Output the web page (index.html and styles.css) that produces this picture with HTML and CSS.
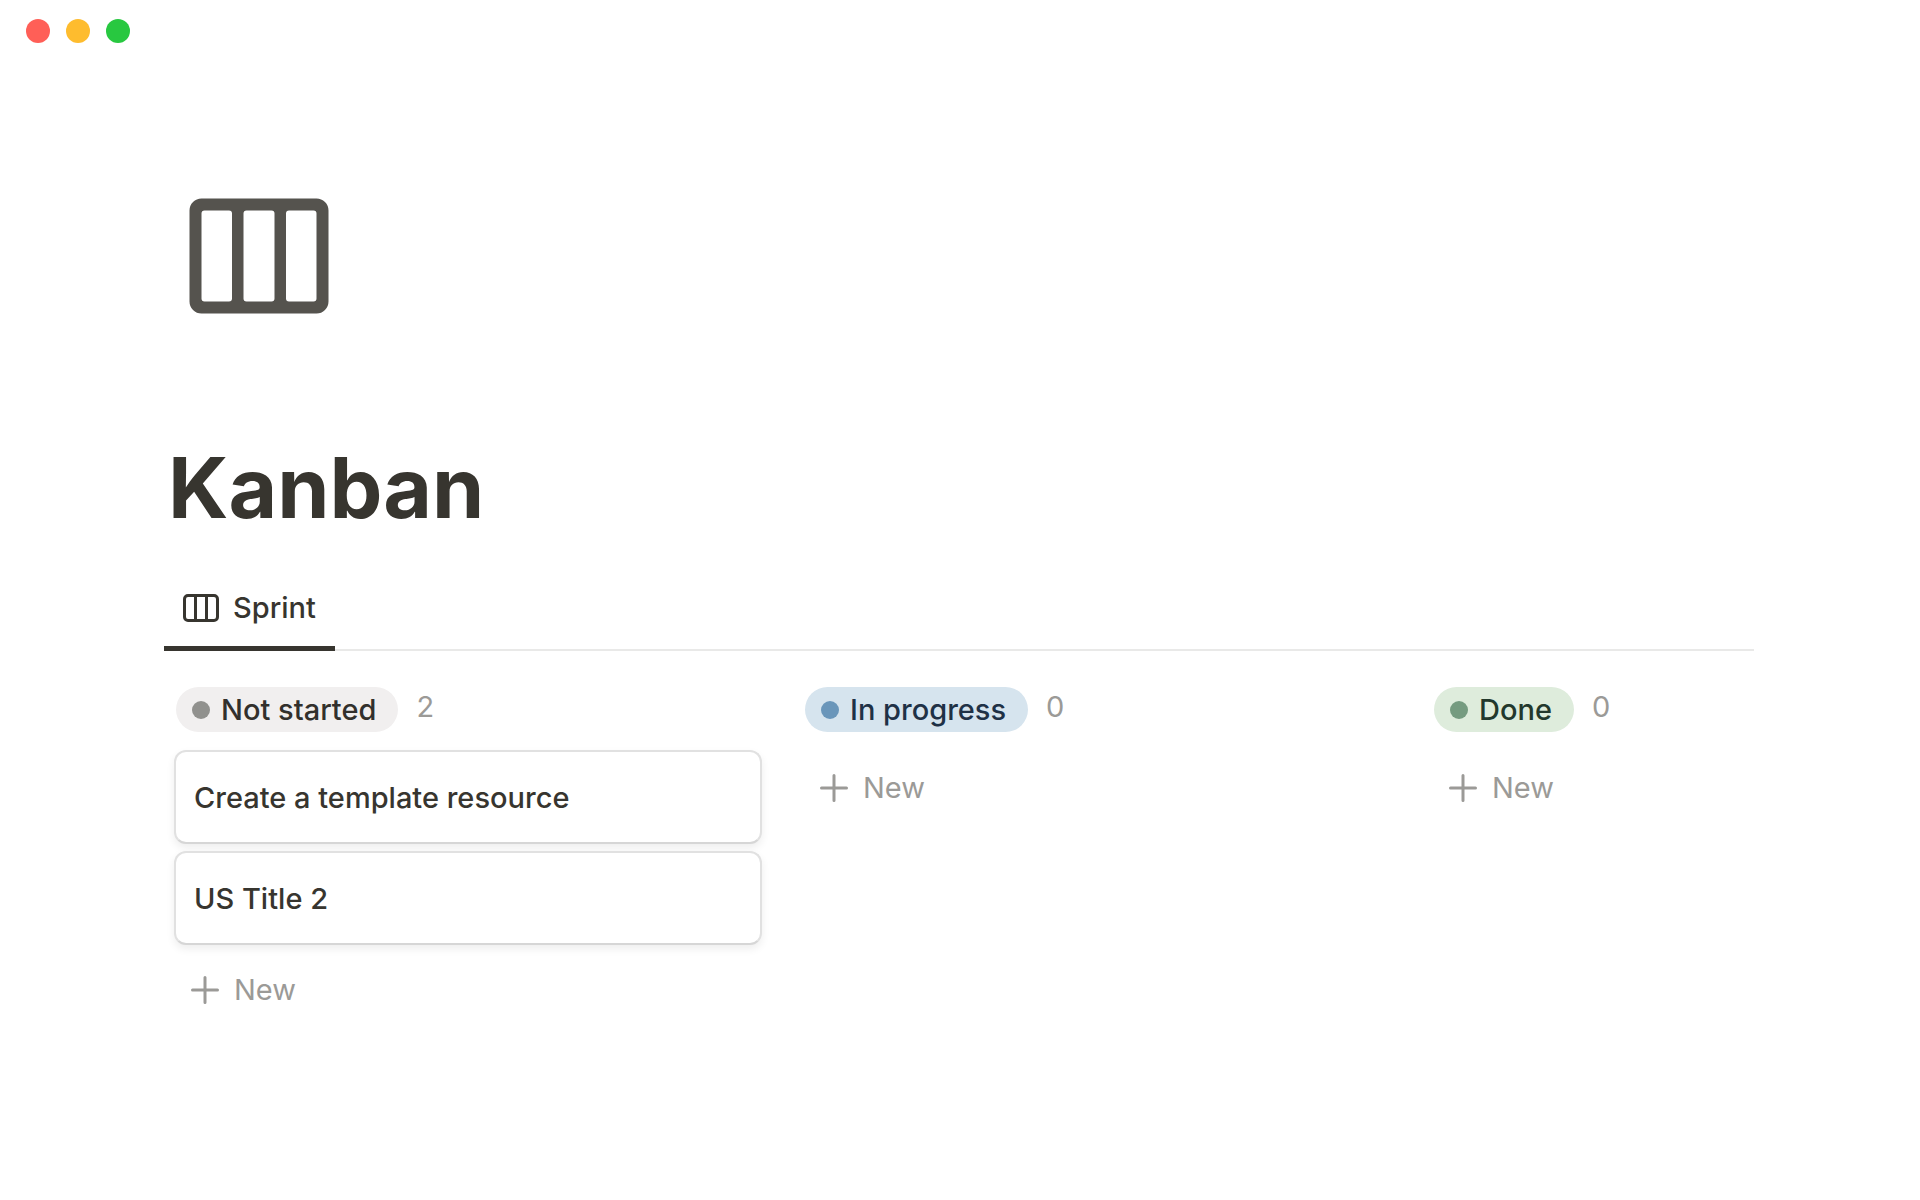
FILE: index.html
```html
<!DOCTYPE html>
<html lang="en">
<head>
<meta charset="utf-8">
<meta name="viewport" content="width=device-width, initial-scale=1">
<title>Kanban</title>
<link rel="stylesheet" href="styles.css">
</head>
<body>
<header class="titlebar">
  <button class="light light-close" aria-label="Close"></button>
  <button class="light light-minimize" aria-label="Minimize"></button>
  <button class="light light-zoom" aria-label="Zoom"></button>
</header>
<main class="page">
  <svg class="page-icon" viewBox="0 0 140 116" aria-hidden="true">
    <path fill="currentColor" fill-rule="evenodd" d="M12.500 0.500H127.500a12 12 0 0 1 12 12V103.500a12 12 0 0 1-12 12H12.500a12 12 0 0 1-12-12V12.500a12 12 0 0 1 12-12ZM15.500 12.500a3 3 0 0 0-3 3V100.500a3 3 0 0 0 3 3H40a3 3 0 0 0 3-3V15.500a3 3 0 0 0-3-3ZM57.500 12.500a3 3 0 0 0-3 3V100.500a3 3 0 0 0 3 3H82.500a3 3 0 0 0 3-3V15.500a3 3 0 0 0-3-3ZM100 12.500a3 3 0 0 0-3 3V100.500a3 3 0 0 0 3 3H124.500a3 3 0 0 0 3-3V15.500a3 3 0 0 0-3-3Z"/>
  </svg>
  <h1 class="page-title">Kanban</h1>
  <nav class="tabs">
    <button class="tab">
      <svg class="tab-icon" viewBox="0 0 36 28" fill="none" stroke="currentColor" aria-hidden="true">
        <rect x="1.500" y="1.500" width="33" height="25" rx="3.500" stroke-width="3"/>
        <path d="M12.500 2V26M23.500 2V26" stroke-width="3"/>
      </svg>
      Sprint
    </button>
  </nav>
  <div class="board">
    <section class="column">
      <h2 class="column-head"><span class="status status-gray">Not started</span><span class="count">2</span></h2>
      <article class="card">Create a template resource</article>
      <article class="card">US Title 2</article>
      <button class="new"><svg class="plus" viewBox="0 0 28 28" aria-hidden="true"><path d="M14 1.500V26.500M1.500 14H26.500"/></svg>New</button>
    </section>
    <section class="column">
      <h2 class="column-head"><span class="status status-blue">In progress</span><span class="count">0</span></h2>
      <button class="new"><svg class="plus" viewBox="0 0 28 28" aria-hidden="true"><path d="M14 1.500V26.500M1.500 14H26.500"/></svg>New</button>
    </section>
    <section class="column">
      <h2 class="column-head"><span class="status status-green">Done</span><span class="count">0</span></h2>
      <button class="new"><svg class="plus" viewBox="0 0 28 28" aria-hidden="true"><path d="M14 1.500V26.500M1.500 14H26.500"/></svg>New</button>
    </section>
  </div>
</main>
</body>
</html>
```
FILE: styles.css
```css
* {
  box-sizing: border-box;
}

body {
  margin: 0;
  background: #fff;
  color: #37352f;
  font: 500 29px/40px Inter, "Liberation Sans", sans-serif;
}

button {
  border: 0;
  padding: 0;
  background: none;
  color: inherit;
  font: inherit;
  cursor: pointer;
}

.titlebar {
  display: flex;
  gap: 16px;
  padding: 19px 26px;
}

.light {
  width: 24px;
  height: 24px;
  border-radius: 50%;
}

.light-close { background: #ff5f57; }
.light-minimize { background: #febc2e; }
.light-zoom { background: #28c840; }

.page {
  padding: 136px 166px 80px 164px;
}

.page-icon {
  display: block;
  width: 140px;
  height: 116px;
  margin-left: 25px;
  color: #55534e;
}

.page-title {
  margin: 120px 0 0 4px;
  font-size: 84px;
  line-height: 108px;
  font-weight: 700;
}

.tabs {
  display: flex;
  margin-top: 32px;
  box-shadow: inset 0 -2px #e9e9e8;
}

.tab {
  display: flex;
  align-items: center;
  gap: 14px;
  height: 77px;
  padding: 0 19px 5px;
  border-bottom: 5px solid #37352f;
}

.tab-icon {
  width: 36px;
  height: 28px;
}

.board {
  display: grid;
  grid-template-columns: minmax(0, 588px) minmax(0, 588px) minmax(0, 1fr);
  gap: 41px;
  padding: 36px 0 0 10px;
}

.column {
  display: flex;
  flex-direction: column;
  gap: 7px;
}

.column-head {
  display: flex;
  gap: 18px;
  margin: 0 0 11px 2px;
  font: inherit;
}

.status {
  display: flex;
  align-items: center;
  gap: 11px;
  height: 45px;
  padding: 0 22px 0 16px;
  border-radius: 23px;
}

.status::before {
  content: "";
  width: 18px;
  height: 18px;
  border-radius: 50%;
  background: currentColor;
}

.status-gray { background: #f1efef; color: #32302c; }
.status-blue { background: #d6e4ee; color: #1f3146; }
.status-green { background: #deecdc; color: #22382c; }
.status-gray::before { background: #91918e; }
.status-blue::before { background: #6a96ba; }
.status-green::before { background: #759b80; }

.count {
  color: #9b9a97;
  font-weight: 400;
}

.card {
  height: 94px;
  padding: 26px 18px;
  border: 2px solid #e1e1e1;
  border-bottom-color: #d6d6d6;
  border-radius: 12px;
  background: #fff;
  box-shadow: 0 4px 8px rgb(15 15 15 / 7%);
}

.new {
  display: flex;
  align-items: center;
  gap: 15px;
  height: 76px;
  padding: 0 17px;
  color: #9b9a97;
  font-weight: 400;
}

.plus {
  width: 28px;
  height: 28px;
  fill: none;
  stroke: currentColor;
  stroke-width: 3;
  stroke-linecap: round;
}
```
